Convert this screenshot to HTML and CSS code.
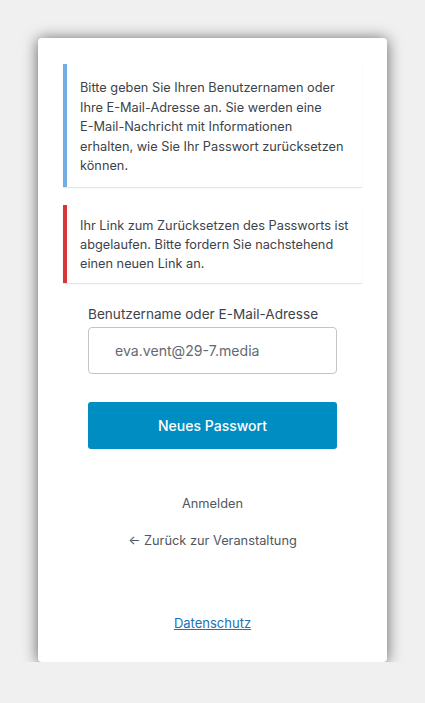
FILE: index.html
```html
<!DOCTYPE html>
<html lang="de">
<head>
<meta charset="utf-8">
<title>Passwort zurücksetzen</title>
<link rel="stylesheet" href="styles.css">
</head>
<body>
<div class="card">
  <p class="notice notice-info">Bitte geben Sie Ihren Benutzernamen oder Ihre E-Mail-Adresse an. Sie werden eine <span class="nowrap">E-Mail-Nachricht</span> mit Informationen <span class="nowrap">erhalten, wie</span> Sie Ihr Passwort zurücksetzen können.</p>
  <p class="notice notice-error">Ihr Link zum Zurücksetzen des Passworts ist abgelaufen. Bitte fordern Sie nachstehend einen neuen Link an.</p>
  <form class="form">
    <label class="label" for="user">Benutzername oder E-Mail-Adresse</label>
    <input class="input" id="user" type="text" value="eva.vent@29-7.media">
    <button class="button" type="button">Neues Passwort</button>
  </form>
  <nav class="links">
    <a class="link" href="#">Anmelden</a>
    <a class="link" href="#">← Zurück zur Veranstaltung</a>
  </nav>
  <div class="privacy"><a href="#">Datenschutz</a></div>
</div>
</body>
</html>
```
FILE: styles.css
```css
html, body {
  margin: 0;
  padding: 0;
}
body {
  background: #f0f0f1;
  font-family: Inter, "Open Sans", sans-serif;
  color: #3c434a;
  padding-top: 38px;
}
.card {
  box-sizing: border-box;
  width: 349px;
  height: 624px;
  margin: 0 auto;
  background: #fff;
  border-radius: 4px;
  box-shadow: 0 1px 15px rgba(0, 0, 0, 0.6);
  padding: 26px 25px 0;
  display: flex;
  flex-direction: column;
}
.notice {
  margin: 0;
  background: #fff;
  border-left: 4px solid #72aee6;
  box-shadow: 0 1px 1px 0 rgba(0, 0, 0, 0.1);
  padding: 14px 12px 11px 13px;
  font-size: 12.75px;
  line-height: 19.5px;
}
.nowrap {
  white-space: nowrap;
}
.notice-error {
  border-left-color: #d63638;
  margin-top: 18px;
  padding-top: 11px;
  padding-bottom: 10px;
  line-height: 19px;
}
.form {
  padding: 0 25px;
  margin-top: 21px;
  display: flex;
  flex-direction: column;
}
.label {
  font-size: 13.6px;
  line-height: 20px;
  color: #3c434a;
}
.input {
  box-sizing: border-box;
  margin-top: 3px;
  height: 47px;
  border: 1px solid #c3c4c7;
  border-radius: 4px;
  padding: 0 26px;
  font-family: inherit;
  font-size: 14.1px;
  color: #646970;
  background: #fff;
}
.button {
  margin-top: 28px;
  height: 47px;
  border: none;
  border-radius: 3px;
  background: #008ec2;
  color: #fff;
  font-family: inherit;
  font-size: 14px;
  font-weight: 500;
}
.links {
  margin-top: 45px;
  display: flex;
  flex-direction: column;
  align-items: center;
  gap: 17px;
}
.link {
  font-size: 12.8px;
  line-height: 20px;
  color: #50575e;
  text-decoration: none;
}
.privacy {
  margin-top: 62px;
  text-align: center;
  font-size: 13px;
  line-height: 20px;
}
.privacy a {
  color: #2271b1;
}
```
